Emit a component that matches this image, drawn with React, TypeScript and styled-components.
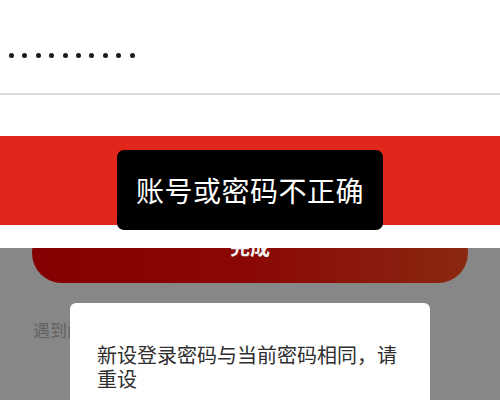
import styled, { createGlobalStyle } from "styled-components";

const GlobalStyle = createGlobalStyle`
  html, body {
    margin: 0;
    padding: 0;
    background: #ffffff;
  }
  body {
    font-family: "Noto Sans CJK SC", "Noto Sans", sans-serif;
  }
`;

const Page = styled.div`
  position: relative;
  width: 500px;
  height: 400px;
  overflow: hidden;
  display: flex;
  flex-direction: column;
`;

const InputArea = styled.div`
  height: 136px;
  background: #fff;
  display: flex;
  flex-direction: column;
`;

const PasswordRow = styled.div`
  height: 93px;
  display: flex;
  align-items: center;
  gap: 8.4px;
  padding-left: 9px;
  padding-top: 17px;
  box-sizing: border-box;
`;

const Dot = styled.span`
  width: 5px;
  height: 5px;
  border-radius: 50%;
  background: #1c1c1c;
`;

const Divider = styled.div`
  height: 2px;
  background: #dcdcdc;
`;

const RedBand = styled.div`
  height: 89px;
  background: #e1261b;
`;

const WhiteStrip = styled.div`
  height: 23px;
  background: #fff;
`;

const DimSection = styled.div`
  flex: 1;
  background: #878787;
  overflow: hidden;
  display: flex;
  flex-direction: column;
`;

const DimButton = styled.div`
  height: 60px;
  margin: -25px 32px 0;
  border-radius: 30px;
  background: linear-gradient(90deg, #850000 0%, #8a0804 50%, #8b2812 100%);
  color: #f2f2f2;
  font-size: 20px;
  font-weight: 700;
  display: flex;
  align-items: center;
  justify-content: center;
  padding-bottom: 14px;
  box-sizing: border-box;
`;

const HelpText = styled.div`
  margin: 34px 0 0 33px;
  font-size: 17px;
  color: #636363;
`;

const Toast = styled.div`
  position: absolute;
  left: 117px;
  top: 150px;
  width: 266px;
  height: 80px;
  border-radius: 7px;
  background: #000;
  color: #fff;
  font-size: 28px;
  display: flex;
  align-items: center;
  justify-content: center;
  letter-spacing: 0.5px;
`;

const Dialog = styled.div`
  position: absolute;
  left: 70px;
  top: 303px;
  width: 360px;
  height: 120px;
  border-radius: 6px;
  background: #fff;
  padding: 40px 27px 0 27px;
  box-sizing: border-box;
`;

const DialogText = styled.p`
  margin: 0;
  font-size: 20px;
  line-height: 24px;
  color: #2e2e2e;
`;

export default function App() {
  return (
    <>
      <GlobalStyle />
      <Page>
        <InputArea>
          <PasswordRow>
            {Array.from({ length: 10 }).map((_, i) => (
              <Dot key={i} />
            ))}
          </PasswordRow>
          <Divider />
        </InputArea>
        <RedBand />
        <WhiteStrip />
        <DimSection>
          <DimButton>完成</DimButton>
          <HelpText>遇到问题？</HelpText>
        </DimSection>
        <Toast>账号或密码不正确</Toast>
        <Dialog>
          <DialogText>新设登录密码与当前密码相同，请重设</DialogText>
        </Dialog>
      </Page>
    </>
  );
}
